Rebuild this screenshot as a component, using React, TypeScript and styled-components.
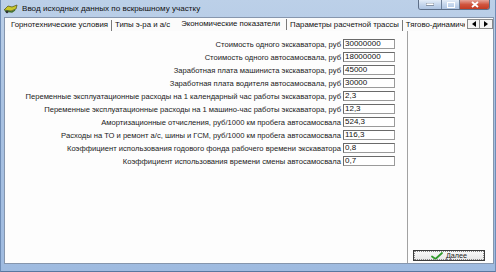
import React from 'react';
import styled, { createGlobalStyle } from 'styled-components';

const GlobalStyle = createGlobalStyle`
  html, body {
    margin: 0;
    padding: 0;
    background: #ffffff;
  }
  * {
    box-sizing: border-box;
  }
`;

const Window = styled.div`
  width: 496px;
  height: 272px;
  display: flex;
  flex-direction: column;
  background: linear-gradient(180deg, #bcd0e8 0%, #a9c2e2 40%, #9fbbe0 100%);
  border-left: 1px solid #6f8db6;
  border-right: 1px solid #6f8db6;
  border-bottom: 1px solid #58779f;
  font-family: 'Liberation Sans', Arial, sans-serif;
  font-size: 8px;
  color: #1a1a1a;
  overflow: hidden;
`;

const TitleBar = styled.div`
  height: 17px;
  flex: none;
  display: flex;
  align-items: center;
  padding-left: 2px;
  position: relative;
`;

const Title = styled.span`
  margin-left: 4px;
  font-size: 8.1px;
  color: #111;
  white-space: nowrap;
`;

const Controls = styled.div`
  position: absolute;
  top: 0;
  right: 5px;
  display: flex;
  height: 10px;
  border: 1px solid #5d6f88;
  border-top: none;
  border-radius: 0 0 3px 3px;
  overflow: hidden;
`;

interface ICtrl {
  w: number;
  close?: boolean;
}

const CtrlButton = styled.div<ICtrl>`
  width: ${({ w }): string => `${w}px`};
  height: 100%;
  display: flex;
  align-items: center;
  justify-content: center;
  background: ${({ close }): string =>
    close
      ? 'linear-gradient(180deg, #e6a59a 0%, #d0553f 50%, #c23a22 100%)'
      : 'linear-gradient(180deg, #e4edf8 0%, #c5d6ec 50%, #aec4e2 100%)'};
  & + & {
    border-left: 1px solid #6d7f98;
  }
`;

const Client = styled.div`
  flex: 1;
  display: flex;
  flex-direction: column;
  margin: 0 1px 7px 3px;
  background: #fbfbfb;
  border: 1px solid #8696ad;
`;

const TabStrip = styled.div`
  height: 13px;
  flex: none;
  display: flex;
  align-items: flex-end;
  padding-left: 3px;
  position: relative;
  overflow: hidden;
  background: #fbfbfb;
`;

interface ITab {
  active?: boolean;
  sep?: boolean;
}

const Tab = styled.div<ITab>`
  height: 11px;
  line-height: 10px;
  padding: ${({ active }): string => (active ? '0 6px 0 7px' : '0 3px')};
  white-space: nowrap;
  font-size: 7.8px;
  color: #111;
  border-right: 1px solid ${({ sep }): string => (sep ? '#7a7a7a' : 'transparent')};
  margin-bottom: ${({ active }): string => (active ? '1px' : '0')};
`;

const TabScroll = styled.div`
  position: absolute;
  right: 0;
  top: 1px;
  display: flex;
  background: #fbfbfb;
  padding-left: 2px;
`;

const ScrollBtn = styled.div`
  width: 13px;
  height: 10px;
  border: 1px solid #8a8a8a;
  background: #f4f4f4;
  display: flex;
  align-items: center;
  justify-content: center;
  & + & {
    border-left: none;
  }
`;

const Page = styled.div`
  flex: 1;
  display: flex;
  background: #fdfdfd;
`;

const FormPane = styled.div`
  width: 402px;
  flex: none;
  display: flex;
  flex-direction: column;
  gap: 3px;
  padding: 8px 12px 0 0;
`;

const Row = styled.div`
  display: flex;
  justify-content: flex-end;
  align-items: center;
  gap: 2px;
  height: 10px;
`;

const Label = styled.span`
  white-space: nowrap;
  color: #1a1a1a;
  font-size: 7.6px;
`;

const Field = styled.div`
  width: 52px;
  height: 10px;
  flex: none;
  border: 1px solid #9a9a9a;
  border-top-color: #6a6a6a;
  border-left-color: #6a6a6a;
  background: #fff;
  padding-left: 1px;
  line-height: 8px;
  font-size: 8px;
  color: #111;
`;

const SidePane = styled.div`
  flex: 1;
  border-left: 1px solid #a2a2a2;
  display: flex;
  align-items: flex-end;
  justify-content: flex-start;
  padding: 0 0 2px 5px;
`;

const NextButton = styled.div`
  width: 72px;
  height: 11px;
  flex: none;
  border: 1px solid #3c3c3c;
  background: linear-gradient(180deg, #fafafa 0%, #e6e6e6 100%);
  display: flex;
  align-items: center;
  justify-content: center;
  gap: 3px;
  font-size: 7.2px;
  line-height: 8px;
  outline: 1px dotted #888;
  outline-offset: -2px;
`;

const AppIcon: React.FC = () => (
  <svg width="15" height="11" viewBox="0 0 15 11">
    <path d="M1 7 L5 3 L9 4 L14 2 L13 6 L8 8 Z" fill="#c9c82a" stroke="#5b5a1e" strokeWidth="0.8" />
    <path d="M2 8 L9 9 L12 7" fill="none" stroke="#3f6e2a" strokeWidth="1.4" />
    <circle cx="4" cy="9" r="1.3" fill="#333" />
  </svg>
);

const Check: React.FC = () => (
  <svg width="12" height="8" viewBox="0 0 12 8">
    <path d="M1 4.5 L4.5 7 L11 1" fill="none" stroke="#2f9a2a" strokeWidth="1.8" strokeLinecap="round" />
  </svg>
);

const fields: [string, string][] = [
  ['Стоимость одного экскаватора, руб', '30000000'],
  ['Стоимость одного автосамосвала, руб', '18000000'],
  ['Заработная плата машиниста экскаватора, руб', '45000'],
  ['Заработная плата водителя автосамосвала, руб', '30000'],
  ['Переменные эксплуатационные расходы на 1 календарный час работы экскаватора, руб', '2,3'],
  ['Переменные эксплуатационные расходы на 1 машино-час работы экскаватора, руб', '12,3'],
  ['Амортизационные отчисления, руб/1000 км пробега автосамосвала', '524,3'],
  ['Расходы на ТО и ремонт а/с, шины и ГСМ, руб/1000 км пробега автосамосвала', '116,3'],
  ['Коэффициент использования годового фонда рабочего времени экскаватора', '0,8'],
  ['Коэффициент использования времени смены автосамосвала', '0,7'],
];

const App: React.FC = () => {
  return (
    <>
      <GlobalStyle />
      <Window>
        <TitleBar>
          <AppIcon />
          <Title>Ввод исходных данных по вскрышному участку</Title>
          <Controls>
            <CtrlButton w={22}>
              <svg width="8" height="3" viewBox="0 0 8 3">
                <rect x="0" y="0" width="8" height="2.5" fill="#fff" stroke="#4a5a70" strokeWidth="0.6" />
              </svg>
            </CtrlButton>
            <CtrlButton w={18}>
              <svg width="8" height="6" viewBox="0 0 8 6">
                <rect x="0.5" y="0.5" width="7" height="5" fill="none" stroke="#fff" strokeWidth="1" />
              </svg>
            </CtrlButton>
            <CtrlButton w={30} close>
              <svg width="8" height="7" viewBox="0 0 8 7">
                <path d="M1 1 L7 6 M7 1 L1 6" stroke="#fff" strokeWidth="1.8" />
              </svg>
            </CtrlButton>
          </Controls>
        </TitleBar>
        <Client>
          <TabStrip>
            <Tab sep>Горнотехнические условия</Tab>
            <Tab>Типы э-ра и а/с</Tab>
            <Tab active sep>Экономические показатели</Tab>
            <Tab sep>Параметры расчетной трассы</Tab>
            <Tab>Тягово-динамические</Tab>
            <TabScroll>
              <ScrollBtn>
                <svg width="4" height="6" viewBox="0 0 4 6">
                  <path d="M4 0 L0 3 L4 6 Z" fill="#000" />
                </svg>
              </ScrollBtn>
              <ScrollBtn>
                <svg width="4" height="6" viewBox="0 0 4 6">
                  <path d="M0 0 L4 3 L0 6 Z" fill="#000" />
                </svg>
              </ScrollBtn>
            </TabScroll>
          </TabStrip>
          <Page>
            <FormPane>
              {fields.map(([label, value]) => (
                <Row key={label}>
                  <Label>{label}</Label>
                  <Field>{value}</Field>
                </Row>
              ))}
            </FormPane>
            <SidePane>
              <NextButton>
                <Check />
                Далее
              </NextButton>
            </SidePane>
          </Page>
        </Client>
      </Window>
    </>
  );
};

export default App;
